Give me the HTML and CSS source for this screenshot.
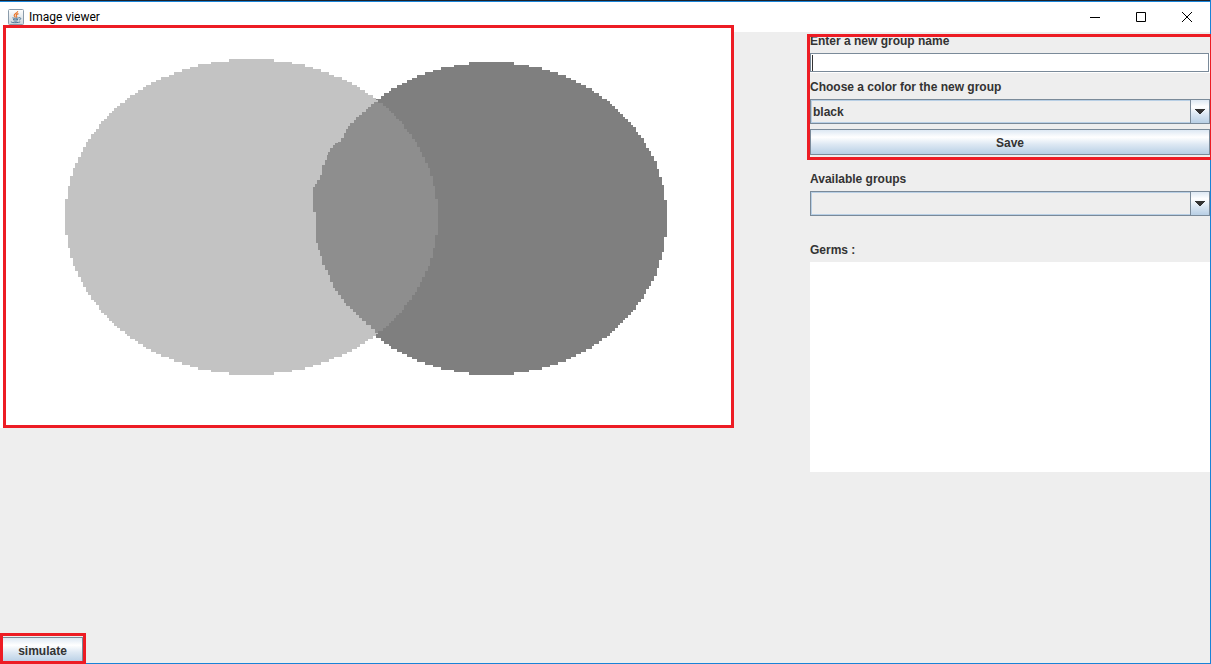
FILE: index.html
```html
<!DOCTYPE html>
<html lang="en">
<head>
<meta charset="utf-8">
<title>Image viewer</title>
<link rel="stylesheet" href="styles.css">
</head>
<body>
<div class="window">
  <header class="titlebar">
    <svg class="app-icon" viewBox="0 0 16 16" aria-hidden="true">
      <defs><linearGradient id="tile" x2="0" y2="1"><stop offset="0" stop-color="#fff"/><stop offset="1" stop-color="#cbd5dc"/></linearGradient></defs>
      <rect x=".5" y=".5" width="15" height="15" rx="1" fill="url(#tile)" stroke="#8b9cab"/>
      <path d="M9.7 2.2C10 4 5.8 4.7 6.2 6.5c.2.8 1 1.200 1.200 1.900M10.500 4.600C8.500 5.200 7.700 6 8.600 7.100c.4.600.1 1.100-.5 1.500" fill="none" stroke="#e8752a" stroke-width="1.200"/>
      <path d="M4.500 8.800c1.500.7 4.500.7 6.300 0M5 10.300c1.600.6 3.700.6 5.200 0M5.600 11.800c1.300.5 2.800.5 3.900 0M11 8.800c2.300-.7 2.300 1.800.2 2.200M3.200 12.500c-1 1.500 6.500 1.500 9 .4" fill="none" stroke="#4c7595"/>
    </svg>
    <h1 class="title">Image viewer</h1>
    <div class="window-controls">
      <button class="control" aria-label="Minimize"><svg viewBox="0 0 10 10"><path d="M0 5.500h10"/></svg></button>
      <button class="control" aria-label="Maximize"><svg viewBox="0 0 10 10"><path d="M.5.5h9v9h-9z"/></svg></button>
      <button class="control" aria-label="Close"><svg viewBox="0 0 10 10"><path d="M0 0l10 10M10 0L0 10"/></svg></button>
    </div>
  </header>
  <main class="content">
    <section class="viewer">
      <div class="picture marked">
        <svg class="canvas" viewBox="0 32 731 393" role="img" aria-label="Two overlapping discs">
          <path id="dark" fill="#7f7f7f"/>
          <path id="light" fill="#c3c3c3"/>
          <clipPath id="lens"><path id="lens-shape"/></clipPath>
          <path clip-path="url(#lens)" fill="#8e8e8e" d="M378 102H374V104H371V107H368V109H366V112H362V115H359V117H356V120H354V123H350V126H348V129H346V133H344V138H341V142H338V143H335V145H333V148H330V152H328V155H327V160H325V165H322V175H320V180H317V184H315V187H313V212H316V243H318V250H320V256H322V265H325V270H328V275H330V282H333V288H335V291H338V295H341V299H344V303H346V306H350V309H353V312H356V315H359V318H362V321H366V325H371V329H375V333H378H450V102Z"/>
        </svg>
      </div>
      <div class="action marked"><button class="button simulate">simulate</button></div>
    </section>
    <aside class="sidebar">
      <form class="new-group marked" onsubmit="return false">
        <label class="label" for="name">Enter a new group name</label>
        <div class="text-wrap"><input class="text" id="name" type="text"><span class="caret"></span></div>
        <label class="label" for="color">Choose a color for the new group</label>
        <div class="combo"><select id="color"><option>black</option></select><span class="arrow"><svg viewBox="0 0 10 5"><path d="M0 0h10v1H9v1H8v1H7v1H6v1H4V4H3V3H2V2H1V1H0z"/></svg></span></div>
        <button class="button save">Save</button>
      </form>
      <div class="groups">
        <label class="label" for="groups">Available groups</label>
        <div class="combo"><select id="groups"></select><span class="arrow"><svg viewBox="0 0 10 5"><path d="M0 0h10v1H9v1H8v1H7v1H6v1H4V4H3V3H2V2H1V1H0z"/></svg></span></div>
      </div>
      <div class="germs">
        <label class="label" for="germs">Germs :</label>
        <textarea class="list" id="germs" readonly></textarea>
      </div>
    </aside>
  </main>
</div>
<script src="discs.js"></script>
</body>
</html>
```
FILE: discs.js
```js
// Builds a disc outline out of enlarged image pixels.
const CELL = 2.6;

function disc(left, top, right, bottom) {
  const cx = (left + right) / 2;
  const cy = (top + bottom) / 2;
  const rx = (right - left) / 2;
  const ry = (bottom - top) / 2;
  const rows = Math.round((bottom - top) / CELL);
  const height = (bottom - top) / rows;
  let path = '';
  for (let i = 0; i < rows; i++) {
    const y0 = Math.round(top + i * height);
    const y1 = Math.round(top + (i + 1) * height);
    const dy = (top + (i + 0.5) * height - cy) / ry;
    const inset = Math.round(rx * (1 - Math.sqrt(1 - dy * dy)) / CELL) * CELL;
    const x0 = Math.round(left + inset);
    const x1 = Math.round(right - inset);
    path += `M${x0} ${y0}H${x1}V${y1}H${x0}Z`;
  }
  return path;
}

const light = disc(65, 59, 438, 375);
document.getElementById('light').setAttribute('d', light);
document.getElementById('lens-shape').setAttribute('d', light);
document.getElementById('dark').setAttribute('d', disc(316, 62, 667, 375));
```
FILE: styles.css
```css
* { box-sizing: border-box; }

body {
  margin: 0;
  overflow-x: hidden;
  background: #eee;
  color: #333;
  font: bold 12px/16px "Liberation Sans", Arial, sans-serif;
}

.window {
  display: flex;
  flex-direction: column;
  min-height: 100vh;
  border: 1px solid #1883d7;
  border-left: 0;
  border-top: 0;
}

.titlebar {
  display: flex;
  align-items: center;
  height: 32px;
  padding-left: 8px;
  border-top: 1px solid #1c222b;
  background: #fff;
  box-shadow: inset 0 1px #1883d7;
  color: #000;
}

.app-icon { width: 16px; height: 16px; }

.title {
  flex: 1;
  margin: 0 0 0 5px;
  font: 12px/16px Roboto, "Noto Sans", sans-serif;
}

.window-controls { display: flex; }

.control {
  display: grid;
  place-items: center;
  width: 46px;
  height: 28px;
  padding: 0;
  border: 0;
  background: none;
}

.control svg {
  width: 10px;
  height: 10px;
  overflow: visible;
  fill: none;
  stroke: #000;
}

.content {
  display: grid;
  flex: 1;
  grid-template-columns: minmax(0, 1fr) 400px;
}

.viewer {
  display: flex;
  flex-direction: column;
  justify-content: space-between;
  padding-right: 76px;
}

.marked { position: relative; }

.marked::after {
  position: absolute;
  border: 3px solid #ed1c24;
  content: "";
  pointer-events: none;
}

.picture {
  padding-right: 3px;
  padding-bottom: 3px;
  background: #fff;
}

.picture::after { inset: -7px 0 0 3px; }

.canvas {
  display: block;
  width: 100%;
  shape-rendering: crispEdges;
}

.action { width: 86px; padding: 0 3px 0 2px; }

.action::after { inset: -4px 0 -1px 0; }

.button {
  display: block;
  width: 100%;
  height: 26px;
  padding: 2px 0 0;
  border: 1px solid #7a8a99;
  background: linear-gradient(#dde8f3, #fff 30%, #dde8f3 60%, #b8cfe5);
  color: #333;
  font: inherit;
}

.sidebar {
  display: flex;
  flex-direction: column;
  padding-top: 1px;
}

.new-group::after { inset: 1px -3px -5px -3px; }

.label { display: block; margin-bottom: 4px; }

.text-wrap {
  position: relative;
  margin-bottom: 6px;
  padding: 0 1px 1px 0;
  background: #fff;
}

.text {
  display: block;
  width: 100%;
  height: 19px;
  padding: 0 3px;
  border: 1px solid #7a8a99;
  border-radius: 0;
  outline: 0;
  font: inherit;
}

.caret {
  position: absolute;
  top: 2px;
  left: 2px;
  width: 1px;
  height: 16px;
  background: #333;
}

.combo { position: relative; }

.combo select {
  display: block;
  width: 100%;
  height: 25px;
  padding: 0 22px 0 2px;
  border: 1px solid #7a8a99;
  border-radius: 0;
  background: #eee;
  box-shadow: inset 0 0 0 1px #b8cfe5;
  color: #333;
  font: inherit;
  appearance: none;
}

.arrow {
  position: absolute;
  inset: 0 0 0 auto;
  display: grid;
  place-items: center;
  width: 20px;
  border: 1px solid #7a8a99;
  background: linear-gradient(#dde8f3, #fff 30%, #dde8f3 60%, #b8cfe5);
  pointer-events: none;
}

.arrow svg { width: 10px; height: 5px; fill: #333; }

.save { margin-top: 5px; }

.groups { margin-top: 16px; }

.germs { margin-top: 26px; }

.list {
  display: block;
  width: 100%;
  height: 210px;
  border: 0;
  background: #fff;
  outline: 0;
  resize: none;
}
```
